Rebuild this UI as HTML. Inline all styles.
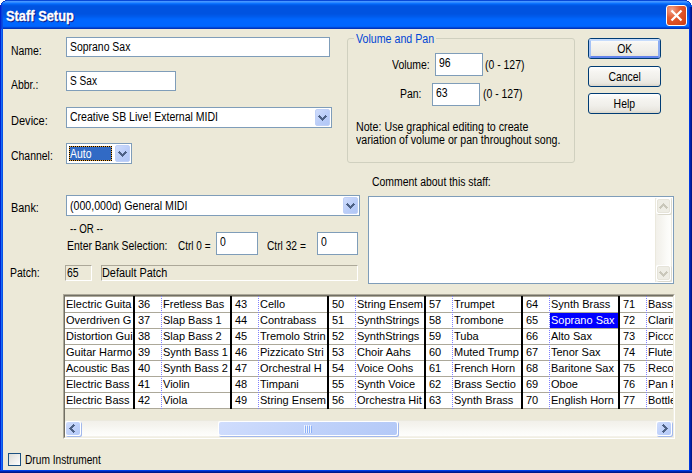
<!DOCTYPE html><html><head><meta charset="utf-8"><style>
*{margin:0;padding:0;box-sizing:border-box}
html,body{width:692px;height:473px;overflow:hidden;background:#fff}
body{position:relative;font-family:"Liberation Sans", sans-serif;font-size:11px;color:#000}
.a{position:absolute}
.t{position:absolute;font-size:12px;line-height:14px;white-space:nowrap;transform-origin:0 0}
.tc{height:15px;overflow:hidden;white-space:nowrap;font-size:11px;line-height:15px;padding-left:1px}
.edit{position:absolute;background:#fff;border:1px solid #7F9DB9}
.dd{position:absolute;border-radius:2px;background:linear-gradient(135deg,#CFDCFC,#BACDF8 55%,#B1C7F6);border:1px solid #BFD0F7}
.btn{position:absolute;border:1px solid #003C74;border-radius:3px;background:linear-gradient(#FFFFFF,#F6F5F1 25%,#F0EFEA 60%,#E9E7E0 85%,#D9D5C9)}
.sbw{position:absolute;background:#fff;border-radius:2px}
.sbs{position:absolute;background:#A2B8EC;border-radius:2px}
.sbf{position:absolute;border-radius:2px;background:linear-gradient(135deg,#D0DDFD,#C0D2FA 50%,#B4C9F7)}
.dbw{position:absolute;background:#fff;border-radius:2px}
.dbs{position:absolute;background:#DAD8CB;border-radius:2px}
.dbf{position:absolute;border-radius:2px;background:#EEEDE5;border:1px solid #E6E4DA}
</style></head><body>
<div class="a" style="left:0;top:0;width:692px;height:473px;background:#0A3BD6"></div>
<svg class="a" style="left:0;top:0" width="692" height="29" shape-rendering="crispEdges"><rect x="0" y="0" width="692" height="1" fill="#0848D8"/><rect x="0" y="1" width="692" height="1" fill="#4696FF"/><rect x="0" y="2" width="692" height="1" fill="#2E88FF"/><rect x="0" y="3" width="692" height="1" fill="#0C72FF"/><rect x="0" y="4" width="692" height="1" fill="#0262F0"/><rect x="0" y="5" width="692" height="1" fill="#0057E6"/><rect x="0" y="6" width="692" height="1" fill="#0053E0"/><rect x="0" y="7" width="692" height="1" fill="#0053E0"/><rect x="0" y="8" width="692" height="1" fill="#0053E0"/><rect x="0" y="9" width="692" height="1" fill="#0053E0"/><rect x="0" y="10" width="692" height="1" fill="#0053E0"/><rect x="0" y="11" width="692" height="1" fill="#0053E0"/><rect x="0" y="12" width="692" height="1" fill="#0053E0"/><rect x="0" y="13" width="692" height="1" fill="#0053E0"/><rect x="0" y="14" width="692" height="1" fill="#0055E3"/><rect x="0" y="15" width="692" height="1" fill="#0058E8"/><rect x="0" y="16" width="692" height="1" fill="#005BEC"/><rect x="0" y="17" width="692" height="1" fill="#005FF2"/><rect x="0" y="18" width="692" height="1" fill="#0063F8"/><rect x="0" y="19" width="692" height="1" fill="#0065FC"/><rect x="0" y="20" width="692" height="1" fill="#0066FF"/><rect x="0" y="21" width="692" height="1" fill="#0066FF"/><rect x="0" y="22" width="692" height="1" fill="#0066FF"/><rect x="0" y="23" width="692" height="1" fill="#0066FF"/><rect x="0" y="24" width="692" height="1" fill="#0066FF"/><rect x="0" y="25" width="692" height="1" fill="#0066FF"/><rect x="0" y="26" width="692" height="1" fill="#0062F8"/><rect x="0" y="27" width="692" height="1" fill="#0049D9"/><rect x="0" y="28" width="692" height="1" fill="#0034BC"/><rect x="0" y="0" width="5" height="1" fill="#fff"/><rect x="687" y="0" width="5" height="1" fill="#fff"/><rect x="0" y="1" width="3" height="1" fill="#fff"/><rect x="689" y="1" width="3" height="1" fill="#fff"/><rect x="0" y="2" width="2" height="1" fill="#fff"/><rect x="690" y="2" width="2" height="1" fill="#fff"/><rect x="0" y="3" width="1" height="1" fill="#fff"/><rect x="691" y="3" width="1" height="1" fill="#fff"/><rect x="0" y="4" width="1" height="1" fill="#fff"/><rect x="691" y="4" width="1" height="1" fill="#fff"/><rect x="5" y="0" width="2" height="1" fill="#0A3CC8"/><rect x="685" y="0" width="2" height="1" fill="#0A3CC8"/><rect x="3" y="1" width="2" height="1" fill="#0A3CC8"/><rect x="687" y="1" width="2" height="1" fill="#0A3CC8"/><rect x="2" y="2" width="1" height="1" fill="#0A3CC8"/><rect x="689" y="2" width="1" height="1" fill="#0A3CC8"/><rect x="1" y="3" width="1" height="1" fill="#0A3CC8"/><rect x="690" y="3" width="1" height="1" fill="#0A3CC8"/><rect x="1" y="4" width="1" height="1" fill="#0A3CC8"/><rect x="690" y="4" width="1" height="1" fill="#0A3CC8"/></svg>
<svg class="a" style="left:0;top:5px" width="3" height="468" shape-rendering="crispEdges"><rect x="0" y="0" width="1" height="468" fill="#0022D0"/><rect x="1" y="0" width="1" height="24" fill="#0A3ED8"/><rect x="2" y="0" width="1" height="24" fill="#0A4CE0"/><rect x="1" y="24" width="1" height="444" fill="#166CF6"/><rect x="2" y="24" width="1" height="444" fill="#0850E6"/></svg>
<svg class="a" style="left:689px;top:7px" width="3" height="466" shape-rendering="crispEdges"><rect x="0" y="0" width="1" height="466" fill="#0038E0"/><rect x="1" y="0" width="1" height="466" fill="#0020A8"/><rect x="2" y="0" width="1" height="466" fill="#00168A"/></svg>
<svg class="a" style="left:0;top:470px" width="692" height="3" shape-rendering="crispEdges"><rect x="0" y="0" width="692" height="1" fill="#0040E8"/><rect x="0" y="1" width="692" height="1" fill="#0024B0"/><rect x="0" y="2" width="692" height="1" fill="#001888"/></svg>
<div class="a" style="left:3px;top:29px;width:686px;height:441px;background:#ECE9D8"></div>
<div class="a" style="left:7px;top:9px;font-weight:bold;font-size:14px;line-height:16px;color:#0A1883;white-space:nowrap;-webkit-text-stroke:0.3px #0A1883;transform:scaleX(0.918);transform-origin:0 0">Staff Setup</div>
<div class="a" style="left:6px;top:8px;font-weight:bold;font-size:14px;line-height:16px;color:#fff;white-space:nowrap;-webkit-text-stroke:0.3px #fff;transform:scaleX(0.918);transform-origin:0 0">Staff Setup</div>
<div class="a" style="left:666px;top:5px;width:21px;height:21px;border:1px solid #fff;border-radius:3px;background:radial-gradient(circle at 25% 20%,#F2A48C,#E25A2F 40%,#D9481C 75%,#C63C14 100%)"></div>
<svg class="a" style="left:666px;top:5px" width="21" height="21"><path d="M5.5 5.5L15.5 15.5M15.5 5.5L5.5 15.5" stroke="#fff" stroke-width="2.3" /></svg>
<div class="t" style="left:11px;top:44px;transform:scaleX(0.87)">Name:</div>

<div class="t" style="left:11px;top:78px;transform:scaleX(0.87)">Abbr.:</div>

<div class="t" style="left:11px;top:114px;transform:scaleX(0.92)">Device:</div>

<div class="t" style="left:11px;top:149px;transform:scaleX(0.87)">Channel:</div>

<div class="t" style="left:11px;top:201px;transform:scaleX(0.908)">Bank:</div>

<div class="t" style="left:10px;top:266px;transform:scaleX(0.87)">Patch:</div>

<div class="edit" style="left:66px;top:37px;width:264px;height:20px"></div>
<div class="t" style="left:70px;top:40px;transform:scaleX(0.87)">Soprano Sax</div>

<div class="edit" style="left:66px;top:71px;width:110px;height:20px"></div>
<div class="t" style="left:70px;top:74px;transform:scaleX(0.842)">S Sax</div>

<div class="edit" style="left:66px;top:107px;width:266px;height:21px"></div><div class="dd" style="left:315px;top:109px;width:15px;height:17px"></div><svg class="a" style="left:318px;top:115px" width="9" height="6" shape-rendering="crispEdges"><g fill="#4D6185"><rect x="1" y="0" width="1" height="1"/><rect x="7" y="0" width="1" height="1"/><rect x="0" y="1" width="1" height="1"/><rect x="1" y="1" width="1" height="1"/><rect x="2" y="1" width="1" height="1"/><rect x="6" y="1" width="1" height="1"/><rect x="7" y="1" width="1" height="1"/><rect x="8" y="1" width="1" height="1"/><rect x="1" y="2" width="1" height="1"/><rect x="2" y="2" width="1" height="1"/><rect x="3" y="2" width="1" height="1"/><rect x="5" y="2" width="1" height="1"/><rect x="6" y="2" width="1" height="1"/><rect x="7" y="2" width="1" height="1"/><rect x="2" y="3" width="1" height="1"/><rect x="3" y="3" width="1" height="1"/><rect x="4" y="3" width="1" height="1"/><rect x="5" y="3" width="1" height="1"/><rect x="6" y="3" width="1" height="1"/><rect x="3" y="4" width="1" height="1"/><rect x="4" y="4" width="1" height="1"/><rect x="5" y="4" width="1" height="1"/><rect x="4" y="5" width="1" height="1"/></g></svg>
<div class="t" style="left:70px;top:110px;transform:scaleX(0.877)">Creative SB Live! External MIDI</div>

<div class="edit" style="left:66px;top:143px;width:66px;height:21px"></div><div class="dd" style="left:115px;top:145px;width:15px;height:17px"></div><svg class="a" style="left:118px;top:151px" width="9" height="6" shape-rendering="crispEdges"><g fill="#4D6185"><rect x="1" y="0" width="1" height="1"/><rect x="7" y="0" width="1" height="1"/><rect x="0" y="1" width="1" height="1"/><rect x="1" y="1" width="1" height="1"/><rect x="2" y="1" width="1" height="1"/><rect x="6" y="1" width="1" height="1"/><rect x="7" y="1" width="1" height="1"/><rect x="8" y="1" width="1" height="1"/><rect x="1" y="2" width="1" height="1"/><rect x="2" y="2" width="1" height="1"/><rect x="3" y="2" width="1" height="1"/><rect x="5" y="2" width="1" height="1"/><rect x="6" y="2" width="1" height="1"/><rect x="7" y="2" width="1" height="1"/><rect x="2" y="3" width="1" height="1"/><rect x="3" y="3" width="1" height="1"/><rect x="4" y="3" width="1" height="1"/><rect x="5" y="3" width="1" height="1"/><rect x="6" y="3" width="1" height="1"/><rect x="3" y="4" width="1" height="1"/><rect x="4" y="4" width="1" height="1"/><rect x="5" y="4" width="1" height="1"/><rect x="4" y="5" width="1" height="1"/></g></svg>
<div class="a" style="left:69px;top:146px;width:43px;height:15px;background:#316AC5"></div><svg class="a" style="left:69px;top:146px" width="43" height="15" shape-rendering="crispEdges"><g fill="#000"><rect x="0" y="0" width="1" height="1"/><rect x="0" y="2" width="1" height="1"/><rect x="0" y="4" width="1" height="1"/><rect x="0" y="6" width="1" height="1"/><rect x="0" y="8" width="1" height="1"/><rect x="0" y="10" width="1" height="1"/><rect x="0" y="12" width="1" height="1"/><rect x="0" y="14" width="1" height="1"/><rect x="2" y="0" width="1" height="1"/><rect x="2" y="14" width="1" height="1"/><rect x="4" y="0" width="1" height="1"/><rect x="4" y="14" width="1" height="1"/><rect x="6" y="0" width="1" height="1"/><rect x="6" y="14" width="1" height="1"/><rect x="8" y="0" width="1" height="1"/><rect x="8" y="14" width="1" height="1"/><rect x="10" y="0" width="1" height="1"/><rect x="10" y="14" width="1" height="1"/><rect x="12" y="0" width="1" height="1"/><rect x="12" y="14" width="1" height="1"/><rect x="14" y="0" width="1" height="1"/><rect x="14" y="14" width="1" height="1"/><rect x="16" y="0" width="1" height="1"/><rect x="16" y="14" width="1" height="1"/><rect x="18" y="0" width="1" height="1"/><rect x="18" y="14" width="1" height="1"/><rect x="20" y="0" width="1" height="1"/><rect x="20" y="14" width="1" height="1"/><rect x="22" y="0" width="1" height="1"/><rect x="22" y="14" width="1" height="1"/><rect x="24" y="0" width="1" height="1"/><rect x="24" y="14" width="1" height="1"/><rect x="26" y="0" width="1" height="1"/><rect x="26" y="14" width="1" height="1"/><rect x="28" y="0" width="1" height="1"/><rect x="28" y="14" width="1" height="1"/><rect x="30" y="0" width="1" height="1"/><rect x="30" y="14" width="1" height="1"/><rect x="32" y="0" width="1" height="1"/><rect x="32" y="14" width="1" height="1"/><rect x="34" y="0" width="1" height="1"/><rect x="34" y="14" width="1" height="1"/><rect x="36" y="0" width="1" height="1"/><rect x="36" y="14" width="1" height="1"/><rect x="38" y="0" width="1" height="1"/><rect x="38" y="14" width="1" height="1"/><rect x="40" y="0" width="1" height="1"/><rect x="40" y="14" width="1" height="1"/><rect x="42" y="0" width="1" height="1"/><rect x="42" y="2" width="1" height="1"/><rect x="42" y="4" width="1" height="1"/><rect x="42" y="6" width="1" height="1"/><rect x="42" y="8" width="1" height="1"/><rect x="42" y="10" width="1" height="1"/><rect x="42" y="12" width="1" height="1"/><rect x="42" y="14" width="1" height="1"/></g><g fill="#E8A23A"><rect x="0" y="1" width="1" height="1"/><rect x="0" y="3" width="1" height="1"/><rect x="0" y="5" width="1" height="1"/><rect x="0" y="7" width="1" height="1"/><rect x="0" y="9" width="1" height="1"/><rect x="0" y="11" width="1" height="1"/><rect x="0" y="13" width="1" height="1"/><rect x="1" y="0" width="1" height="1"/><rect x="1" y="14" width="1" height="1"/><rect x="3" y="0" width="1" height="1"/><rect x="3" y="14" width="1" height="1"/><rect x="5" y="0" width="1" height="1"/><rect x="5" y="14" width="1" height="1"/><rect x="7" y="0" width="1" height="1"/><rect x="7" y="14" width="1" height="1"/><rect x="9" y="0" width="1" height="1"/><rect x="9" y="14" width="1" height="1"/><rect x="11" y="0" width="1" height="1"/><rect x="11" y="14" width="1" height="1"/><rect x="13" y="0" width="1" height="1"/><rect x="13" y="14" width="1" height="1"/><rect x="15" y="0" width="1" height="1"/><rect x="15" y="14" width="1" height="1"/><rect x="17" y="0" width="1" height="1"/><rect x="17" y="14" width="1" height="1"/><rect x="19" y="0" width="1" height="1"/><rect x="19" y="14" width="1" height="1"/><rect x="21" y="0" width="1" height="1"/><rect x="21" y="14" width="1" height="1"/><rect x="23" y="0" width="1" height="1"/><rect x="23" y="14" width="1" height="1"/><rect x="25" y="0" width="1" height="1"/><rect x="25" y="14" width="1" height="1"/><rect x="27" y="0" width="1" height="1"/><rect x="27" y="14" width="1" height="1"/><rect x="29" y="0" width="1" height="1"/><rect x="29" y="14" width="1" height="1"/><rect x="31" y="0" width="1" height="1"/><rect x="31" y="14" width="1" height="1"/><rect x="33" y="0" width="1" height="1"/><rect x="33" y="14" width="1" height="1"/><rect x="35" y="0" width="1" height="1"/><rect x="35" y="14" width="1" height="1"/><rect x="37" y="0" width="1" height="1"/><rect x="37" y="14" width="1" height="1"/><rect x="39" y="0" width="1" height="1"/><rect x="39" y="14" width="1" height="1"/><rect x="41" y="0" width="1" height="1"/><rect x="41" y="14" width="1" height="1"/><rect x="42" y="1" width="1" height="1"/><rect x="42" y="3" width="1" height="1"/><rect x="42" y="5" width="1" height="1"/><rect x="42" y="7" width="1" height="1"/><rect x="42" y="9" width="1" height="1"/><rect x="42" y="11" width="1" height="1"/><rect x="42" y="13" width="1" height="1"/></g></svg>
<div class="t" style="left:70px;top:147px;color:#fff;transform:scaleX(0.87)">Auto</div>

<div class="edit" style="left:66px;top:195px;width:294px;height:21px"></div><div class="dd" style="left:343px;top:197px;width:15px;height:17px"></div><svg class="a" style="left:346px;top:203px" width="9" height="6" shape-rendering="crispEdges"><g fill="#4D6185"><rect x="1" y="0" width="1" height="1"/><rect x="7" y="0" width="1" height="1"/><rect x="0" y="1" width="1" height="1"/><rect x="1" y="1" width="1" height="1"/><rect x="2" y="1" width="1" height="1"/><rect x="6" y="1" width="1" height="1"/><rect x="7" y="1" width="1" height="1"/><rect x="8" y="1" width="1" height="1"/><rect x="1" y="2" width="1" height="1"/><rect x="2" y="2" width="1" height="1"/><rect x="3" y="2" width="1" height="1"/><rect x="5" y="2" width="1" height="1"/><rect x="6" y="2" width="1" height="1"/><rect x="7" y="2" width="1" height="1"/><rect x="2" y="3" width="1" height="1"/><rect x="3" y="3" width="1" height="1"/><rect x="4" y="3" width="1" height="1"/><rect x="5" y="3" width="1" height="1"/><rect x="6" y="3" width="1" height="1"/><rect x="3" y="4" width="1" height="1"/><rect x="4" y="4" width="1" height="1"/><rect x="5" y="4" width="1" height="1"/><rect x="4" y="5" width="1" height="1"/></g></svg>
<div class="t" style="left:70px;top:199px;transform:scaleX(0.885)">(000,000d) General MIDI</div>

<div class="t" style="left:70px;top:222px;transform:scaleX(0.81)">-- OR --</div>

<div class="t" style="left:67px;top:239px;transform:scaleX(0.87)">Enter Bank Selection:</div>

<div class="t" style="left:178px;top:239px;transform:scaleX(0.832)">Ctrl 0 =</div>

<div class="edit" style="left:216px;top:232px;width:42px;height:23px"></div>
<div class="t" style="left:220px;top:235px;transform:scaleX(0.87)">0</div>

<div class="t" style="left:267px;top:239px;transform:scaleX(0.85)">Ctrl 32 =</div>

<div class="edit" style="left:317px;top:232px;width:41px;height:23px"></div>
<div class="t" style="left:321px;top:235px;transform:scaleX(0.87)">0</div>

<div class="a" style="left:65px;top:265px;width:27px;height:16px;border-top:1px solid #ACA899;border-left:1px solid #ACA899;border-right:1px solid #fff;border-bottom:1px solid #fff"></div>
<div class="t" style="left:67px;top:266px;transform:scaleX(0.87)">65</div>

<div class="a" style="left:101px;top:265px;width:257px;height:16px;border-top:1px solid #ACA899;border-left:1px solid #ACA899;border-right:1px solid #fff;border-bottom:1px solid #fff"></div>
<div class="t" style="left:102px;top:266px;transform:scaleX(0.905)">Default Patch</div>

<div class="a" style="left:347px;top:38px;width:228px;height:125px;border:1px solid #D0D0BF;border-radius:3px"></div>
<div class="a" style="left:354px;top:32px;width:82px;height:12px;background:#ECE9D8"></div>
<div class="t" style="left:356px;top:32px;color:#0046D5;transform:scaleX(0.888)">Volume and Pan</div>

<div class="t" style="left:392px;top:58px;transform:scaleX(0.87)">Volume:</div>

<div class="edit" style="left:435px;top:53px;width:48px;height:23px"></div>
<div class="t" style="left:439px;top:56px;transform:scaleX(0.87)">96</div>

<div class="t" style="left:485px;top:58px;transform:scaleX(0.87)">(0 - 127)</div>

<div class="t" style="left:400px;top:87px;transform:scaleX(0.87)">Pan:</div>

<div class="edit" style="left:432px;top:83px;width:48px;height:23px"></div>
<div class="t" style="left:436px;top:86px;transform:scaleX(0.87)">63</div>

<div class="t" style="left:483px;top:87px;transform:scaleX(0.87)">(0 - 127)</div>

<div class="t" style="left:356px;top:120px;transform:scaleX(0.888)">Note: Use graphical editing to create</div>

<div class="t" style="left:356px;top:133px;transform:scaleX(0.883)">variation of volume or pan throughout song.</div>

<div class="btn" style="left:588px;top:38px;width:73px;height:21px"></div><div class="a" style="left:589px;top:39px;width:71px;height:19px;border:2px solid #9DB9EB;border-top-color:#C6DCFC;border-bottom-color:#6183EC;border-left-color:#A4C2F6;border-right-color:#8AABF2;border-radius:2px"></div><div class="a" style="left:588px;top:42px;width:73px;text-align:center;font-size:12px;line-height:14px"><span style="display:inline-block;transform:scaleX(0.87)">OK</span></div>
<div class="btn" style="left:588px;top:66px;width:73px;height:21px"></div><div class="a" style="left:588px;top:70px;width:73px;text-align:center;font-size:12px;line-height:14px"><span style="display:inline-block;transform:scaleX(0.87)">Cancel</span></div>
<div class="btn" style="left:588px;top:93px;width:73px;height:21px"></div><div class="a" style="left:588px;top:97px;width:73px;text-align:center;font-size:12px;line-height:14px"><span style="display:inline-block;transform:scaleX(0.87)">Help</span></div>
<div class="t" style="left:372px;top:175px;transform:scaleX(0.87)">Comment about this staff:</div>

<div class="edit" style="left:368px;top:196px;width:306px;height:88px"></div>
<div class="a" style="left:655px;top:198px;width:17px;height:84px;background:linear-gradient(90deg,#EBE9DE 0 1px,#F2F0EA 1px,#F5F4EF 35%,#FBFBF8 70%,#FEFEFC calc(100% - 1px),#EBE9DE calc(100% - 1px))"></div>
<div class="dbs" style="left:657px;top:199px;width:15px;height:16px"></div><div class="dbw" style="left:656px;top:198px;width:15px;height:16px"></div><div class="dbf" style="left:657px;top:199px;width:13px;height:14px"></div>
<svg class="a" style="left:659px;top:203px" width="9" height="6" shape-rendering="crispEdges"><g fill="#C9C7BA"><rect x="1" y="5" width="1" height="1"/><rect x="7" y="5" width="1" height="1"/><rect x="0" y="4" width="1" height="1"/><rect x="1" y="4" width="1" height="1"/><rect x="2" y="4" width="1" height="1"/><rect x="6" y="4" width="1" height="1"/><rect x="7" y="4" width="1" height="1"/><rect x="8" y="4" width="1" height="1"/><rect x="1" y="3" width="1" height="1"/><rect x="2" y="3" width="1" height="1"/><rect x="3" y="3" width="1" height="1"/><rect x="5" y="3" width="1" height="1"/><rect x="6" y="3" width="1" height="1"/><rect x="7" y="3" width="1" height="1"/><rect x="2" y="2" width="1" height="1"/><rect x="3" y="2" width="1" height="1"/><rect x="4" y="2" width="1" height="1"/><rect x="5" y="2" width="1" height="1"/><rect x="6" y="2" width="1" height="1"/><rect x="3" y="1" width="1" height="1"/><rect x="4" y="1" width="1" height="1"/><rect x="5" y="1" width="1" height="1"/><rect x="4" y="0" width="1" height="1"/></g></svg>
<div class="dbs" style="left:657px;top:266px;width:15px;height:16px"></div><div class="dbw" style="left:656px;top:265px;width:15px;height:16px"></div><div class="dbf" style="left:657px;top:266px;width:13px;height:14px"></div>
<svg class="a" style="left:659px;top:271px" width="9" height="6" shape-rendering="crispEdges"><g fill="#C9C7BA"><rect x="1" y="0" width="1" height="1"/><rect x="7" y="0" width="1" height="1"/><rect x="0" y="1" width="1" height="1"/><rect x="1" y="1" width="1" height="1"/><rect x="2" y="1" width="1" height="1"/><rect x="6" y="1" width="1" height="1"/><rect x="7" y="1" width="1" height="1"/><rect x="8" y="1" width="1" height="1"/><rect x="1" y="2" width="1" height="1"/><rect x="2" y="2" width="1" height="1"/><rect x="3" y="2" width="1" height="1"/><rect x="5" y="2" width="1" height="1"/><rect x="6" y="2" width="1" height="1"/><rect x="7" y="2" width="1" height="1"/><rect x="2" y="3" width="1" height="1"/><rect x="3" y="3" width="1" height="1"/><rect x="4" y="3" width="1" height="1"/><rect x="5" y="3" width="1" height="1"/><rect x="6" y="3" width="1" height="1"/><rect x="3" y="4" width="1" height="1"/><rect x="4" y="4" width="1" height="1"/><rect x="5" y="4" width="1" height="1"/><rect x="4" y="5" width="1" height="1"/></g></svg>
<div class="a" style="left:63px;top:294px;width:612px;height:145px;border-top:1px solid #ACA899;border-left:1px solid #ACA899;border-right:1px solid #fff;border-bottom:1px solid #fff"></div>
<div class="a" style="left:64px;top:295px;width:610px;height:143px;border-top:1px solid #716F64;border-left:1px solid #716F64;border-right:1px solid #F1EFE2;border-bottom:1px solid #F1EFE2;background:#ECE9D8"></div>
<div class="a" style="left:65px;top:296px;width:608px;height:1px;background:#ACA899"></div>
<div class="a" style="left:65px;top:297px;width:608px;height:123px;overflow:hidden"><div class="a" style="left:0;top:0px;width:608px;height:15px;background:#fff"></div><div class="a" style="left:0;top:15px;width:608px;height:1px;background:#ACA899"></div><div class="a" style="left:0;top:16px;width:608px;height:15px;background:#fff"></div><div class="a" style="left:0;top:31px;width:608px;height:1px;background:#ACA899"></div><div class="a" style="left:0;top:32px;width:608px;height:15px;background:#fff"></div><div class="a" style="left:0;top:47px;width:608px;height:1px;background:#ACA899"></div><div class="a" style="left:0;top:48px;width:608px;height:15px;background:#fff"></div><div class="a" style="left:0;top:63px;width:608px;height:1px;background:#ACA899"></div><div class="a" style="left:0;top:64px;width:608px;height:15px;background:#fff"></div><div class="a" style="left:0;top:79px;width:608px;height:1px;background:#ACA899"></div><div class="a" style="left:0;top:80px;width:608px;height:15px;background:#fff"></div><div class="a" style="left:0;top:95px;width:608px;height:1px;background:#ACA899"></div><div class="a" style="left:0;top:96px;width:608px;height:15px;background:#fff"></div><div class="a" style="left:0;top:111px;width:608px;height:1px;background:#ACA899"></div><div class="a tc" style="left:0px;top:0px;width:68px;">Electric Guita</div><div class="a tc" style="left:0px;top:16px;width:68px;">Overdriven G</div><div class="a tc" style="left:0px;top:32px;width:68px;">Distortion Gui</div><div class="a tc" style="left:0px;top:48px;width:68px;">Guitar Harmo</div><div class="a tc" style="left:0px;top:64px;width:68px;">Acoustic Bas</div><div class="a tc" style="left:0px;top:80px;width:68px;">Electric Bass</div><div class="a tc" style="left:0px;top:96px;width:68px;">Electric Bass</div><div class="a" style="left:68px;top:-1px;width:2px;height:113px;background:#000"></div><div class="a tc" style="left:70px;top:0px;width:26px;padding-left:3px">36</div><div class="a tc" style="left:70px;top:16px;width:26px;padding-left:3px">37</div><div class="a tc" style="left:70px;top:32px;width:26px;padding-left:3px">38</div><div class="a tc" style="left:70px;top:48px;width:26px;padding-left:3px">39</div><div class="a tc" style="left:70px;top:64px;width:26px;padding-left:3px">40</div><div class="a tc" style="left:70px;top:80px;width:26px;padding-left:3px">41</div><div class="a tc" style="left:70px;top:96px;width:26px;padding-left:3px">42</div><div class="a" style="left:96px;top:0;width:1px;height:112px;background:repeating-linear-gradient(#fff 0 1px,#8080FF 1px 2px)"></div><div class="a tc" style="left:97px;top:0px;width:68px;">Fretless Bas</div><div class="a tc" style="left:97px;top:16px;width:68px;">Slap Bass 1</div><div class="a tc" style="left:97px;top:32px;width:68px;">Slap Bass 2</div><div class="a tc" style="left:97px;top:48px;width:68px;">Synth Bass 1</div><div class="a tc" style="left:97px;top:64px;width:68px;">Synth Bass 2</div><div class="a tc" style="left:97px;top:80px;width:68px;">Violin</div><div class="a tc" style="left:97px;top:96px;width:68px;">Viola</div><div class="a" style="left:165px;top:-1px;width:2px;height:113px;background:#000"></div><div class="a tc" style="left:167px;top:0px;width:26px;padding-left:3px">43</div><div class="a tc" style="left:167px;top:16px;width:26px;padding-left:3px">44</div><div class="a tc" style="left:167px;top:32px;width:26px;padding-left:3px">45</div><div class="a tc" style="left:167px;top:48px;width:26px;padding-left:3px">46</div><div class="a tc" style="left:167px;top:64px;width:26px;padding-left:3px">47</div><div class="a tc" style="left:167px;top:80px;width:26px;padding-left:3px">48</div><div class="a tc" style="left:167px;top:96px;width:26px;padding-left:3px">49</div><div class="a" style="left:193px;top:0;width:1px;height:112px;background:repeating-linear-gradient(#fff 0 1px,#8080FF 1px 2px)"></div><div class="a tc" style="left:194px;top:0px;width:68px;">Cello</div><div class="a tc" style="left:194px;top:16px;width:68px;">Contrabass</div><div class="a tc" style="left:194px;top:32px;width:68px;">Tremolo Strin</div><div class="a tc" style="left:194px;top:48px;width:68px;">Pizzicato Stri</div><div class="a tc" style="left:194px;top:64px;width:68px;">Orchestral H</div><div class="a tc" style="left:194px;top:80px;width:68px;">Timpani</div><div class="a tc" style="left:194px;top:96px;width:68px;">String Ensem</div><div class="a" style="left:262px;top:-1px;width:2px;height:113px;background:#000"></div><div class="a tc" style="left:264px;top:0px;width:26px;padding-left:3px">50</div><div class="a tc" style="left:264px;top:16px;width:26px;padding-left:3px">51</div><div class="a tc" style="left:264px;top:32px;width:26px;padding-left:3px">52</div><div class="a tc" style="left:264px;top:48px;width:26px;padding-left:3px">53</div><div class="a tc" style="left:264px;top:64px;width:26px;padding-left:3px">54</div><div class="a tc" style="left:264px;top:80px;width:26px;padding-left:3px">55</div><div class="a tc" style="left:264px;top:96px;width:26px;padding-left:3px">56</div><div class="a" style="left:290px;top:0;width:1px;height:112px;background:repeating-linear-gradient(#fff 0 1px,#8080FF 1px 2px)"></div><div class="a tc" style="left:291px;top:0px;width:68px;">String Ensem</div><div class="a tc" style="left:291px;top:16px;width:68px;">SynthStrings</div><div class="a tc" style="left:291px;top:32px;width:68px;">SynthStrings</div><div class="a tc" style="left:291px;top:48px;width:68px;">Choir Aahs</div><div class="a tc" style="left:291px;top:64px;width:68px;">Voice Oohs</div><div class="a tc" style="left:291px;top:80px;width:68px;">Synth Voice</div><div class="a tc" style="left:291px;top:96px;width:68px;">Orchestra Hit</div><div class="a" style="left:359px;top:-1px;width:2px;height:113px;background:#000"></div><div class="a tc" style="left:361px;top:0px;width:26px;padding-left:3px">57</div><div class="a tc" style="left:361px;top:16px;width:26px;padding-left:3px">58</div><div class="a tc" style="left:361px;top:32px;width:26px;padding-left:3px">59</div><div class="a tc" style="left:361px;top:48px;width:26px;padding-left:3px">60</div><div class="a tc" style="left:361px;top:64px;width:26px;padding-left:3px">61</div><div class="a tc" style="left:361px;top:80px;width:26px;padding-left:3px">62</div><div class="a tc" style="left:361px;top:96px;width:26px;padding-left:3px">63</div><div class="a" style="left:387px;top:0;width:1px;height:112px;background:repeating-linear-gradient(#fff 0 1px,#8080FF 1px 2px)"></div><div class="a tc" style="left:388px;top:0px;width:68px;">Trumpet</div><div class="a tc" style="left:388px;top:16px;width:68px;">Trombone</div><div class="a tc" style="left:388px;top:32px;width:68px;">Tuba</div><div class="a tc" style="left:388px;top:48px;width:68px;">Muted Trump</div><div class="a tc" style="left:388px;top:64px;width:68px;">French Horn</div><div class="a tc" style="left:388px;top:80px;width:68px;">Brass Sectio</div><div class="a tc" style="left:388px;top:96px;width:68px;">Synth Brass</div><div class="a" style="left:456px;top:-1px;width:2px;height:113px;background:#000"></div><div class="a tc" style="left:458px;top:0px;width:26px;padding-left:3px">64</div><div class="a tc" style="left:458px;top:16px;width:26px;padding-left:3px">65</div><div class="a tc" style="left:458px;top:32px;width:26px;padding-left:3px">66</div><div class="a tc" style="left:458px;top:48px;width:26px;padding-left:3px">67</div><div class="a tc" style="left:458px;top:64px;width:26px;padding-left:3px">68</div><div class="a tc" style="left:458px;top:80px;width:26px;padding-left:3px">69</div><div class="a tc" style="left:458px;top:96px;width:26px;padding-left:3px">70</div><div class="a" style="left:484px;top:0;width:1px;height:112px;background:repeating-linear-gradient(#fff 0 1px,#8080FF 1px 2px)"></div><div class="a tc" style="left:485px;top:0px;width:68px;">Synth Brass</div><div class="a" style="left:485px;top:16px;width:68px;height:15px;background:#0000FF"></div><div class="a tc" style="left:485px;top:16px;width:68px;color:#fff;">Soprano Sax</div><div class="a tc" style="left:485px;top:32px;width:68px;">Alto Sax</div><div class="a tc" style="left:485px;top:48px;width:68px;">Tenor Sax</div><div class="a tc" style="left:485px;top:64px;width:68px;">Baritone Sax</div><div class="a tc" style="left:485px;top:80px;width:68px;">Oboe</div><div class="a tc" style="left:485px;top:96px;width:68px;">English Horn</div><div class="a" style="left:553px;top:-1px;width:2px;height:113px;background:#000"></div><div class="a tc" style="left:555px;top:0px;width:26px;padding-left:3px">71</div><div class="a tc" style="left:555px;top:16px;width:26px;padding-left:3px">72</div><div class="a tc" style="left:555px;top:32px;width:26px;padding-left:3px">73</div><div class="a tc" style="left:555px;top:48px;width:26px;padding-left:3px">74</div><div class="a tc" style="left:555px;top:64px;width:26px;padding-left:3px">75</div><div class="a tc" style="left:555px;top:80px;width:26px;padding-left:3px">76</div><div class="a tc" style="left:555px;top:96px;width:26px;padding-left:3px">77</div><div class="a" style="left:581px;top:0;width:1px;height:112px;background:repeating-linear-gradient(#fff 0 1px,#8080FF 1px 2px)"></div><div class="a tc" style="left:582px;top:0px;width:68px;">Bass</div><div class="a tc" style="left:582px;top:16px;width:68px;">Clarin</div><div class="a tc" style="left:582px;top:32px;width:68px;">Picco</div><div class="a tc" style="left:582px;top:48px;width:68px;">Flute</div><div class="a tc" style="left:582px;top:64px;width:68px;">Reco</div><div class="a tc" style="left:582px;top:80px;width:68px;">Pan F</div><div class="a tc" style="left:582px;top:96px;width:68px;">Bottle</div></div>
<div class="a" style="left:161px;top:296px;width:1px;height:1px;background:#8080FF"></div>
<div class="a" style="left:258px;top:296px;width:1px;height:1px;background:#8080FF"></div>
<div class="a" style="left:355px;top:296px;width:1px;height:1px;background:#8080FF"></div>
<div class="a" style="left:452px;top:296px;width:1px;height:1px;background:#8080FF"></div>
<div class="a" style="left:549px;top:296px;width:1px;height:1px;background:#8080FF"></div>
<div class="a" style="left:646px;top:296px;width:1px;height:1px;background:#8080FF"></div>
<div class="a" style="left:133px;top:296px;width:2px;height:1px;background:#000"></div>
<div class="a" style="left:230px;top:296px;width:2px;height:1px;background:#000"></div>
<div class="a" style="left:327px;top:296px;width:2px;height:1px;background:#000"></div>
<div class="a" style="left:424px;top:296px;width:2px;height:1px;background:#000"></div>
<div class="a" style="left:521px;top:296px;width:2px;height:1px;background:#000"></div>
<div class="a" style="left:618px;top:296px;width:2px;height:1px;background:#000"></div>
<div class="a" style="left:65px;top:420px;width:608px;height:17px;background:linear-gradient(#EBE9DE 0 1px,#F2F0EA 1px,#F5F4EF 35%,#FBFBF8 70%,#FEFEFC calc(100% - 1px),#F3F1EA calc(100% - 1px))"></div>
<div class="sbs" style="left:66px;top:422px;width:16px;height:15px"></div><div class="sbw" style="left:65px;top:421px;width:16px;height:15px"></div><div class="sbf" style="left:66px;top:422px;width:14px;height:13px"></div>
<svg class="a" style="left:69px;top:424px" width="6" height="9" shape-rendering="crispEdges"><g fill="#4D6185"><rect x="5" y="1" width="1" height="1"/><rect x="5" y="7" width="1" height="1"/><rect x="4" y="0" width="1" height="1"/><rect x="4" y="1" width="1" height="1"/><rect x="4" y="2" width="1" height="1"/><rect x="4" y="6" width="1" height="1"/><rect x="4" y="7" width="1" height="1"/><rect x="4" y="8" width="1" height="1"/><rect x="3" y="1" width="1" height="1"/><rect x="3" y="2" width="1" height="1"/><rect x="3" y="3" width="1" height="1"/><rect x="3" y="5" width="1" height="1"/><rect x="3" y="6" width="1" height="1"/><rect x="3" y="7" width="1" height="1"/><rect x="2" y="2" width="1" height="1"/><rect x="2" y="3" width="1" height="1"/><rect x="2" y="4" width="1" height="1"/><rect x="2" y="5" width="1" height="1"/><rect x="2" y="6" width="1" height="1"/><rect x="1" y="3" width="1" height="1"/><rect x="1" y="4" width="1" height="1"/><rect x="1" y="5" width="1" height="1"/><rect x="0" y="4" width="1" height="1"/></g></svg>
<div class="sbs" style="left:657px;top:422px;width:16px;height:15px"></div><div class="sbw" style="left:656px;top:421px;width:16px;height:15px"></div><div class="sbf" style="left:657px;top:422px;width:14px;height:13px"></div>
<svg class="a" style="left:662px;top:424px" width="6" height="9" shape-rendering="crispEdges"><g fill="#4D6185"><rect x="0" y="1" width="1" height="1"/><rect x="0" y="7" width="1" height="1"/><rect x="1" y="0" width="1" height="1"/><rect x="1" y="1" width="1" height="1"/><rect x="1" y="2" width="1" height="1"/><rect x="1" y="6" width="1" height="1"/><rect x="1" y="7" width="1" height="1"/><rect x="1" y="8" width="1" height="1"/><rect x="2" y="1" width="1" height="1"/><rect x="2" y="2" width="1" height="1"/><rect x="2" y="3" width="1" height="1"/><rect x="2" y="5" width="1" height="1"/><rect x="2" y="6" width="1" height="1"/><rect x="2" y="7" width="1" height="1"/><rect x="3" y="2" width="1" height="1"/><rect x="3" y="3" width="1" height="1"/><rect x="3" y="4" width="1" height="1"/><rect x="3" y="5" width="1" height="1"/><rect x="3" y="6" width="1" height="1"/><rect x="4" y="3" width="1" height="1"/><rect x="4" y="4" width="1" height="1"/><rect x="4" y="5" width="1" height="1"/><rect x="5" y="4" width="1" height="1"/></g></svg>
<div class="sbs" style="left:219px;top:422px;width:180px;height:15px"></div><div class="sbw" style="left:218px;top:421px;width:180px;height:15px"></div><div class="sbf" style="left:219px;top:422px;width:178px;height:13px"></div>
<svg class="a" style="left:304px;top:425px" width="8" height="8" shape-rendering="crispEdges"><path d="M0.5 0V8M2.5 0V8M4.5 0V8M6.5 0V8" stroke="#EEF4FE" stroke-width="1"/><path d="M1.5 1V8M3.5 1V8M5.5 1V8M7.5 1V8" stroke="#8CB0F8" stroke-width="1"/></svg>
<div class="a" style="left:8px;top:453px;width:13px;height:13px;border:1px solid #1C5180;background:linear-gradient(135deg,#DCDCD7,#FFFFFF)"></div>
<div class="t" style="left:25px;top:453px;transform:scaleX(0.848)">Drum Instrument</div>

</body></html>
